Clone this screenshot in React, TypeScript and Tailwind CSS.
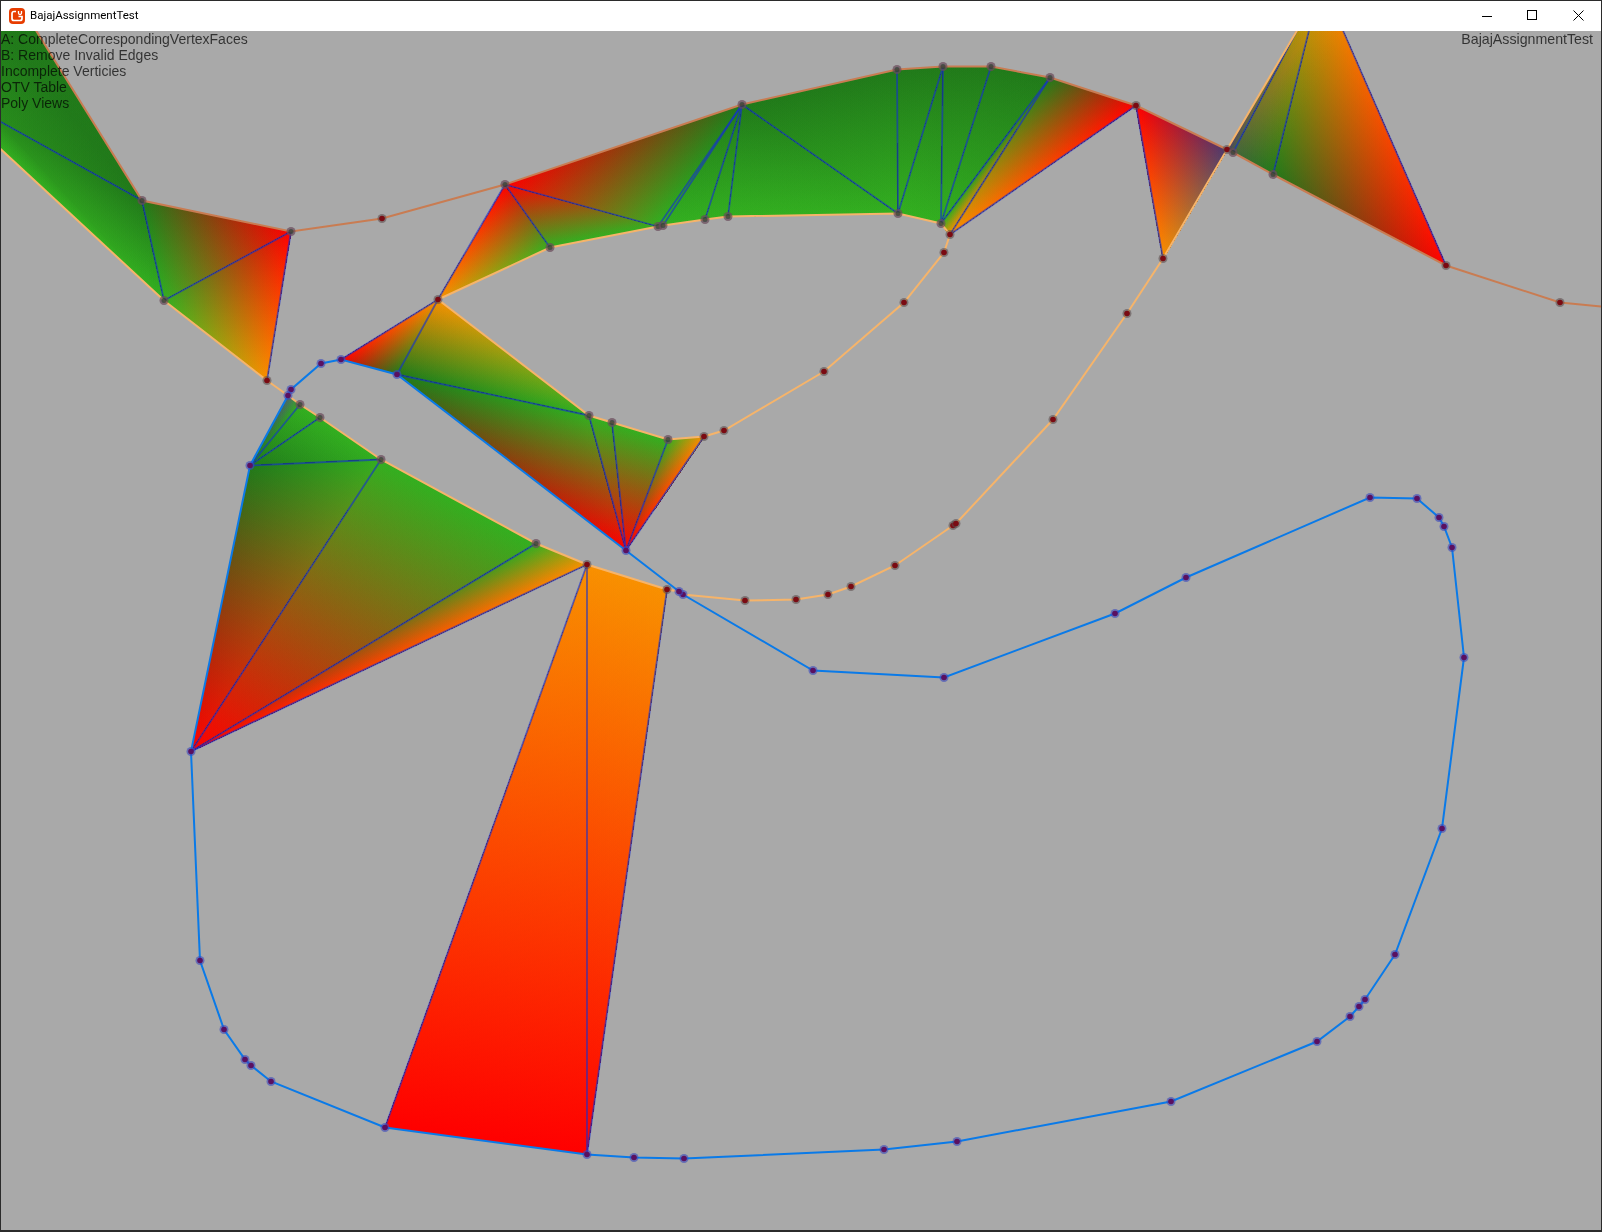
type Pt = [number, number];
type Rgb = [number, number, number];
type Vert = { p: Pt; c: Rgb };

const DARK: Rgb = [33, 122, 26];
const BRIGHT: Rgb = [51, 175, 32];
const RED: Rgb = [255, 0, 0];
const ORANGE: Rgb = [248, 144, 0];
const SLATE: Rgb = [74, 58, 112];
const GREYBLUE: Rgb = [80, 96, 112];

const v = (x: number, y: number, c: Rgb): Vert => ({ p: [x, y], c });

// Named vertices
const A = v(438, 299, ORANGE);
const B = v(341, 359, RED);
const P = v(397, 374, DARK);
const Q = v(589, 415, BRIGHT);
const R = v(612, 422, BRIGHT);
const S = v(668, 439, BRIGHT);
const T = v(704, 436, ORANGE);
const O = v(626, 550, RED);

const E = v(288, 395, GREYBLUE);
const F = v(300, 404, BRIGHT);
const G = v(320, 417, BRIGHT);
const H = v(381, 459, BRIGHT);
const I = v(250, 465, DARK);
const J = v(536, 543, BRIGHT);
const K = v(587, 564, ORANGE);
const L = v(667, 589, ORANGE);
const V = v(191, 751, RED);
const W = v(385, 1127, RED);
const X = v(587, 1154, RED);

const top1 = v(505, 184, RED);
const in1 = v(550, 247, BRIGHT);
const in2 = v(658, 226, BRIGHT);
const in3 = v(663, 225, BRIGHT);
const in4 = v(705, 219, BRIGHT);
const in5 = v(728, 216, BRIGHT);
const in6 = v(898, 213, BRIGHT);
const in7 = v(941, 223, BRIGHT);
const in8 = v(950, 234, ORANGE);
const a1 = v(742, 104, DARK);
const a2 = v(897, 69, DARK);
const a3 = v(943, 66, DARK);
const a4 = v(991, 66, DARK);
const a5 = v(1050, 77, DARK);
const a6 = v(1136, 105, RED);
const b1 = v(1227, 149, SLATE);
const b2 = v(1163, 258, ORANGE);
const c1 = v(1233, 152, [70, 100, 60]);
const c2 = v(1273, 174, DARK);
const c3 = v(1446, 265, RED);
const ct1 = v(1297, 30, [176, 144, 10]);
const ct2 = v(1309, 30, [192, 144, 8]);
const ct3 = v(1343, 30, [240, 128, 0]);

const l0a = v(0, 30, DARK);
const l0b = v(36, 30, DARK);
const l0c = v(0, 121, [40, 140, 28]);
const l0d = v(0, 148, BRIGHT);
const l1 = v(142, 200, DARK);
const l2 = v(164, 300, BRIGHT);
const l3 = v(291, 231, RED);
const l4 = v(267, 380, ORANGE);

const TRIS: [Vert, Vert, Vert][] = [
  [l0a, l0b, l1],
  [l0a, l1, l0c],
  [l0c, l1, l2],
  [l0c, l2, l0d],
  [l1, l2, l3],
  [l2, l3, l4],

  [B, A, P],
  [A, P, Q],
  [P, Q, O],
  [Q, R, O],
  [R, S, O],
  [S, T, O],

  [I, E, F],
  [I, F, G],
  [I, G, H],
  [V, I, H],
  [V, H, J],
  [V, J, K],

  [K, W, X],
  [K, X, L],

  [A, top1, in1],
  [top1, in1, in2],
  [top1, in2, a1],
  [a1, in2, in3],
  [a1, in3, in4],
  [a1, in4, in5],
  [a1, in5, in6],
  [a1, in6, a2],
  [a2, in6, a3],
  [in6, a3, in7],
  [a3, in7, a4],
  [a4, in7, a5],
  [a5, in7, in8],
  [a5, in8, a6],

  [a6, b1, b2],

  [c2, c3, ct3],
  [c2, ct3, ct2],
  [c1, c2, ct2],
  [c1, ct2, ct1],
  [b1, c1, ct1],
];

// triangle edges that no drawn line covers
const SEAMS: [Vert, Vert][] = [
  [l0a, l1],
  [l0c, l2],
  [c2, ct3],
  [c1, ct2],
];

// foot of the altitude from a onto the line b-c
function foot(a: Pt, b: Pt, c: Pt): Pt {
  const dx = c[0] - b[0];
  const dy = c[1] - b[1];
  const t = ((a[0] - b[0]) * dx + (a[1] - b[1]) * dy) / (dx * dx + dy * dy);
  return [b[0] + t * dx, b[1] + t * dy];
}

const DIAGONALS: [Pt, Pt][] = [
  [[0, 121], l1.p],
  [l1.p, l2.p],
  [l3.p, l2.p],
  [l3.p, l4.p],
  [B.p, A.p],
  [A.p, P.p],
  [P.p, Q.p],
  [Q.p, O.p],
  [R.p, O.p],
  [S.p, O.p],
  [T.p, O.p],
  [I.p, F.p],
  [I.p, G.p],
  [I.p, H.p],
  [V.p, H.p],
  [V.p, J.p],
  [V.p, K.p],
  [K.p, W.p],
  [K.p, X.p],
  [L.p, X.p],
  [A.p, top1.p],
  [top1.p, in1.p],
  [top1.p, in2.p],
  [a1.p, in2.p],
  [a1.p, in3.p],
  [a1.p, in4.p],
  [a1.p, in5.p],
  [a1.p, in6.p],
  [a2.p, in6.p],
  [a3.p, in6.p],
  [a3.p, in7.p],
  [a4.p, in7.p],
  [a5.p, in7.p],
  [a5.p, in8.p],
  [a6.p, in8.p],
  [a6.p, b2.p],
  [c3.p, ct3.p],
  [c2.p, ct2.p],
  [c1.p, ct1.p],
];

const OUTER: Pt[] = [
  [36, 30], l1.p, l3.p, [382, 218], top1.p, a1.p, a2.p, a3.p, a4.p, a5.p, a6.p, b1.p, c1.p, c2.p, c3.p, [1560, 302], [1602, 306],
];

const INNER_A: Pt[] = [
  [0, 148], l2.p, l4.p, E.p, F.p, G.p, H.p, J.p, K.p, L.p, [679, 591], [683, 594], [745, 600], [796, 599], [828, 594], [851, 586], [895, 565], [953, 525], [956, 523], [1053, 419], [1127, 313], b2.p, b1.p, [1297, 30],
];

const INNER_B: Pt[] = [
  A.p, Q.p, R.p, S.p, T.p, [724, 430], [824, 371], [904, 302], [944, 252], in8.p, in7.p, in6.p, in5.p, in4.p, in3.p, in2.p, in1.p, A.p,
];

const BLUE: Pt[] = [
  E.p, I.p, V.p, [200, 960], [224, 1029], [245, 1059], [251, 1065], [271, 1081], W.p, X.p, [634, 1157], [684, 1158], [884, 1149], [957, 1141], [1171, 1101], [1317, 1041], [1350, 1016], [1359, 1006], [1365, 999], [1395, 954], [1442, 828], [1464, 657], [1452, 547], [1444, 526], [1439, 517], [1417, 498], [1370, 497], [1186, 577], [1115, 613], [944, 677], [813, 670], [683, 594], O.p, P.p, B.p, [321, 363], [291, 389], E.p,
];

const RED_DOTS: Pt[] = [
  [382, 218], l4.p, A.p, K.p, L.p, T.p, [724, 430], [745, 600], [796, 599], [828, 594], [851, 586], [895, 565], [953, 525], [956, 523], [1053, 419], [1127, 313], in8.p, [944, 252], [904, 302], [824, 371], a6.p, b2.p, b1.p, c3.p, [1560, 302],
];

const GREY_DOTS: Pt[] = [
  l1.p, l2.p, l3.p, top1.p, a1.p, a2.p, a3.p, a4.p, a5.p, in1.p, in2.p, in3.p, in4.p, in5.p, in6.p, in7.p, Q.p, R.p, S.p, F.p, G.p, H.p, J.p, c1.p, c2.p,
];

const BLUE_DOTS: Pt[] = BLUE.slice(0, -1).filter((q) => q !== E.p).concat([E.p, [679, 591]]);

const line = (q: Pt[]) => q.map((z) => z.join(",")).join(" ");
const rgb = (c: Rgb) => `rgb(${c[0]},${c[1]},${c[2]})`;

// Each corner fades to black across the triangle; added together they give vertex colouring.
// crispEdges because plus-lighter also adds alpha, so antialiased rims would go dark.
function ShadedTri({ t, id }: { t: [Vert, Vert, Vert]; id: number }) {
  const pts = line(t.map((c) => c.p));
  return (
    <g className="isolate">
      {t.map((c, i) => {
        const f = foot(c.p, t[(i + 1) % 3].p, t[(i + 2) % 3].p);
        const gid = `tri-${id}-${i}`;
        return (
          <g key={i} className="mix-blend-plus-lighter">
            <linearGradient id={gid} gradientUnits="userSpaceOnUse" x1={c.p[0]} y1={c.p[1]} x2={f[0]} y2={f[1]}>
              <stop offset="0" stopColor={rgb(c.c)} />
              <stop offset="1" stopColor="#000" />
            </linearGradient>
            <polygon points={pts} fill={`url(#${gid})`} stroke={`url(#${gid})`} strokeWidth={0.6} shapeRendering="crispEdges" />
          </g>
        );
      })}
    </g>
  );
}

function Seam({ a, b, id }: { a: Vert; b: Vert; id: number }) {
  const gid = `seam-${id}`;
  return (
    <g>
      <linearGradient id={gid} gradientUnits="userSpaceOnUse" x1={a.p[0]} y1={a.p[1]} x2={b.p[0]} y2={b.p[1]}>
        <stop offset="0" stopColor={rgb(a.c)} />
        <stop offset="1" stopColor={rgb(b.c)} />
      </linearGradient>
      <line x1={a.p[0]} y1={a.p[1]} x2={b.p[0]} y2={b.p[1]} stroke={`url(#${gid})`} strokeWidth={2} />
    </g>
  );
}

function Dots() {
  return (
    <g>
      {RED_DOTS.map((q, i) => (
        <g key={i}>
          <circle cx={q[0]} cy={q[1]} r={4.5} fill="#5a4848" fillOpacity={0.55} />
          <circle cx={q[0]} cy={q[1]} r={2.8} fill="#7a0a12" />
        </g>
      ))}
      {GREY_DOTS.map((q, i) => (
        <g key={i}>
          <circle cx={q[0]} cy={q[1]} r={4.5} fill="#6a4a5a" fillOpacity={0.7} />
          <circle cx={q[0]} cy={q[1]} r={2.5} fill="#1e3a2a" fillOpacity={0.55} />
        </g>
      ))}
      {BLUE_DOTS.map((q, i) => (
        <g key={i}>
          <circle cx={q[0]} cy={q[1]} r={4.5} fill="#3a4ac0" fillOpacity={0.6} />
          <circle cx={q[0]} cy={q[1]} r={2.8} fill="#5a1060" />
        </g>
      ))}
    </g>
  );
}

export default function App() {
  const labels = ["A: CompleteCorrespondingVertexFaces", "B: Remove Invalid Edges", "Incomplete Verticies", "OTV Table", "Poly Views"];

  return (
    <div className="w-[1602px] h-[1232px] flex flex-col border border-b-2 border-[#2b2b2b] bg-[#a9a9a9] overflow-hidden">
      {/* Title bar */}
      <div className="h-[30px] shrink-0 flex items-center bg-white pl-2">
        <svg width="16" height="16" viewBox="0 0 16 16" className="shrink-0">
          <rect width="16" height="16" rx="4" fill="#e73c00" />
          <path d="M7 3.500H5a2 2 0 0 0-2 2v5a2 2 0 0 0 2 2h6a2 2 0 0 0 2-2V8.500H9.500" fill="none" stroke="#fff" strokeWidth="1.7" />
          <path d="M9.500 3v2a1.500 1.500 0 0 0 3 0V3" fill="none" stroke="#fff" strokeWidth="1.300" />
        </svg>
        <span className="ml-[5px] text-[11.5px] text-black font-['Roboto',sans-serif]">BajajAssignmentTest</span>
        <div className="ml-auto flex h-full">
          <div className="w-[46px] flex items-center justify-center">
            <div className="w-[10px] h-px bg-black" />
          </div>
          <div className="w-[45px] flex items-center justify-center">
            <div className="w-[10px] h-[10px] border border-black mr-px mb-[2px]" />
          </div>
          <div className="w-[46px] flex items-center justify-center">
            <svg width="11" height="11" viewBox="0 0 11 11" className="mb-px">
              <path d="M.5.5l10 10M10.500.5l-10 10" stroke="#000" strokeWidth="1" fill="none" />
            </svg>
          </div>
        </div>
      </div>

      {/* Game viewport */}
      <div className="relative flex-1 font-['Liberation_Sans',Arial,sans-serif]">
        <svg className="absolute inset-0 w-full h-full" viewBox="1 30.500 1600 1199">
          {TRIS.map((t, i) => (
            <ShadedTri key={i} t={t} id={i} />
          ))}
          {SEAMS.map(([a, b], i) => (
            <Seam key={i} a={a} b={b} id={i} />
          ))}
          <g stroke="rgb(19,47,206)" strokeOpacity={0.62} strokeWidth={1.8}>
            {DIAGONALS.map(([s, e], i) => (
              <line key={i} x1={s[0]} y1={s[1]} x2={e[0]} y2={e[1]} />
            ))}
          </g>
          <polyline points={line(OUTER)} fill="none" stroke="#c97c52" strokeWidth={2} />
          <polyline points={line(INNER_A)} fill="none" stroke="#f6b46a" strokeWidth={2} />
          <polyline points={line(INNER_B)} fill="none" stroke="#f6b46a" strokeWidth={2} />
          <polyline points={line(BLUE)} fill="none" stroke="#0a7ae8" strokeWidth={2} />
          <Dots />
        </svg>

        <div className="absolute left-0 top-0 text-[14px] leading-[16px] text-black/70">
          {labels.map((t) => (
            <div key={t}>{t}</div>
          ))}
        </div>
        <div className="absolute right-2 top-0 text-[14.2px] leading-[16px] text-black/70">BajajAssignmentTest</div>
      </div>
    </div>
  );
}
